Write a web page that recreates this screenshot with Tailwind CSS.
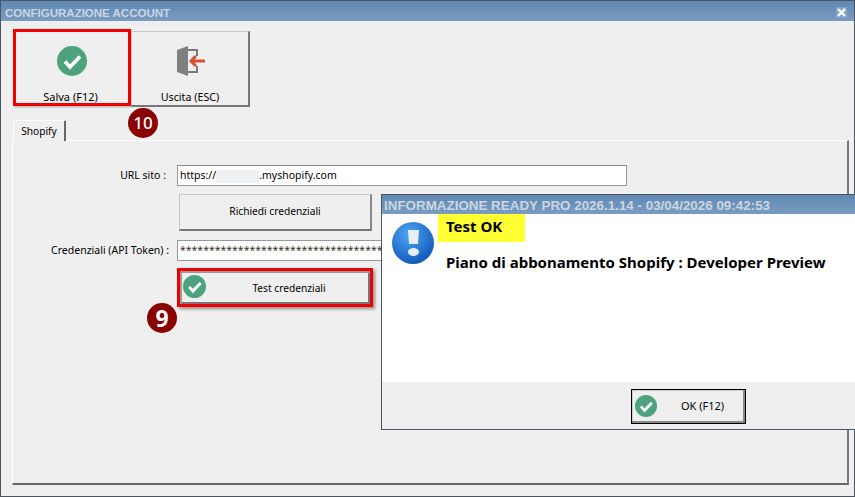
<!DOCTYPE html>
<html lang="en">
<head>
  <meta charset="UTF-8" />
  <title>Configurazione account</title>
  <script src="https://cdn.jsdelivr.net/npm/@tailwindcss/browser@4"></script>
</head>
<body class="bg-[#efefef] font-['Noto_Sans',sans-serif] text-black overflow-hidden">

  <!-- main window -->
  <div class="relative w-[855px] h-[497px] bg-[#efefef] border border-[#4d5560] flex flex-col">
    <div class="h-[20px] bg-gradient-to-b from-[#5f88b2] to-[#7b9cc1] flex items-center justify-between pl-[4px] pr-[7px] pt-[5px] shrink-0">
      <span class="font-['Liberation_Sans',sans-serif] text-[11.5px] font-bold text-[#c9d6e3]">CONFIGURAZIONE ACCOUNT</span>
      <span class="w-[11px] h-[11px] -mt-[3px] bg-[#86a4c6] flex items-center justify-center">
        <svg width="9" height="9" viewBox="0 0 9 9"><path d="M1 1l7 7M8 1L1 8" stroke="#fff" stroke-width="2.4"/></svg>
      </span>
    </div>

    <!-- toolbar -->
    <div class="flex pl-[12px] pt-[8px] h-[98px] shrink-0">
      <button class="w-[118px] h-[77px] border-[3px] border-[#f00000] bg-[#efefef] flex flex-col items-center text-[11px] pt-[14px] shadow-[1px_1px_2px_rgba(0,0,0,0.3)]">
        <svg class="shrink-0" width="30" height="30" viewBox="0 0 30 30"><circle cx="15" cy="15" r="15" fill="#4da37c"/><path d="M8 15.5l5 5.5L23 10.5" fill="none" stroke="#fff" stroke-width="3.6"/></svg>
        <span class="mt-[13px] -ml-[3px]">Salva (F12)</span>
      </button>
      <button class="w-[119px] h-[76px] mt-[2px] border border-[#c8c8c8] border-r-[#777] border-b-[#777] border-b-2 border-r-2 bg-[#efefef] flex flex-col items-center text-[10.7px] pt-[14px]">
        <svg class="ml-[1px] shrink-0" width="28" height="30" viewBox="0 0 28 30">
          <path d="M11 3h10v7h-2V5h-8zM11 27h10v-7h-2v5h-8z" fill="#7a7a7a"/>
          <path d="M0 4l11-4v30l-11-4z" fill="#7f7f7f"/>
          <path d="M28 15H15M19 10l-5 5 5 5" fill="none" stroke="#d8502f" stroke-width="3"/>
        </svg>
        <span class="mt-[13px]">Uscita (ESC)</span>
      </button>
    </div>

    <!-- tab -->
    <div class="pl-[12px] h-[21px] shrink-0 flex items-end">
      <div class="w-[53px] h-[21px] bg-[#efefef] border-l border-l-white border-t border-t-white border-r-2 border-r-[#666] rounded-t-[2px] text-[10.2px] text-center leading-[21px] -mb-px relative z-10">Shopify</div>
    </div>

    <!-- panel -->
    <div class="ml-[11px] w-[837px] h-[345px] border-l border-l-white border-t border-t-white border-r-2 border-r-[#777] border-b-2 border-b-[#666] pt-[24px] text-[10.5px] flex flex-col">
      <div class="flex items-center h-[21px]">
        <label class="w-[154px] text-right pr-[1px]">URL sito :</label>
        <div class="ml-[10px] w-[450px] h-[21px] bg-white border border-[#999] border-t-[#888] pl-[2px] leading-[18px] whitespace-nowrap">https://<span class="inline-block w-[43px] h-[13px] bg-[#eef0f1] align-middle"></span>.myshopify.com</div>
      </div>
      <button class="ml-[166px] mt-[8px] w-[193px] h-[37px] border border-[#c8c8c8] border-r-2 border-b-2 border-r-[#888] border-b-[#777] bg-[#efefef] text-[10.2px]">Richiedi credenziali</button>
      <div class="flex items-center h-[21px] mt-[9px]">
        <label class="w-[156px] text-right shrink-0 whitespace-nowrap text-[10.5px]">Credenziali (API Token) :</label>
        <div class="ml-[8px] w-[450px] h-[21px] bg-white border border-[#999] pl-[2px] leading-[18px] whitespace-nowrap text-[#3a3020]">************************************************************</div>
      </div>
      <button class="ml-[164px] mt-[7px] w-[196px] h-[39px] border-[3px] border-[#f00000] bg-[#efefef] relative text-[10.2px] pl-[28px] pt-[2px] shadow-[2px_2px_3px_rgba(0,0,0,0.4),inset_2px_2px_0_#999,inset_-2px_-2px_0_#777]">
        <svg class="absolute left-[3px] top-[4px]" width="23" height="23" viewBox="0 0 30 30"><circle cx="15" cy="15" r="15" fill="#4da37c"/><path d="M8 15.5l5 5.5L23 10.5" fill="none" stroke="#fff" stroke-width="3.8"/></svg>
        Test credenziali
      </button>
    </div>

    <!-- numbered annotations -->
    <div class="absolute left-[127px] top-[107px] w-[30px] h-[30px] rounded-full bg-[#8a0000] text-white text-[17px] font-medium flex items-center justify-center">10</div>
    <div class="absolute left-[146px] top-[302px] w-[30px] h-[30px] rounded-full bg-[#8a0000] text-white text-[23px] font-bold flex items-center justify-center">9</div>

    <!-- message dialog -->
    <div class="absolute left-[380px] top-[193px] w-[475px] h-[236px] border border-[#4d5560] bg-[#efefef] flex flex-col">
      <div class="h-[19px] bg-gradient-to-b from-[#5f88b2] to-[#7b9cc1] pl-[2px] pt-[2px] shrink-0 leading-[17px] font-['Liberation_Sans',sans-serif] text-[13.4px] font-bold text-[#c9d6e3] whitespace-nowrap">INFORMAZIONE READY PRO 2026.1.14 - 03/04/2026 09:42:53</div>
      <div class="h-[168px] bg-white relative shrink-0 flex">
        <svg class="ml-[10px] mt-[8px] shrink-0" width="42" height="42" viewBox="0 0 42 42">
          <defs><radialGradient id="blue" cx="0.4" cy="0.3" r="0.8"><stop offset="0" stop-color="#4fa6f0"/><stop offset="1" stop-color="#0a50b8"/></radialGradient></defs>
          <circle cx="21" cy="21" r="21" fill="url(#blue)"/>
          <path d="M16 8h11l-1 14h-9z" fill="#e8eef4"/>
          <ellipse cx="21.5" cy="30" rx="5.5" ry="4" fill="#e8eef4"/>
        </svg>
        <div class="ml-[4px] flex flex-col items-start">
          <div class="w-[87px] h-[28px] bg-[#ffff33] pl-[8px] text-[15px] font-bold leading-[24px]">Test OK</div>
          <div class="mt-[9px] pl-[8px] text-[15px] font-bold whitespace-nowrap leading-[22px]">Piano di abbonamento Shopify : Developer Preview</div>
        </div>
      </div>
      <div class="flex-1 pl-[249px] pt-[7px]">
        <button class="w-[115px] h-[35px] border border-black bg-[#efefef] shadow-[inset_-2px_-2px_0_#888,inset_1px_1px_0_#ccc] relative text-[11px] pl-[28px]">
          <svg class="absolute left-[3px] top-[5px]" width="22" height="22" viewBox="0 0 30 30"><circle cx="15" cy="15" r="15" fill="#4da37c"/><path d="M8 15.5l5 5.5L23 10.5" fill="none" stroke="#fff" stroke-width="3.8"/></svg>
          OK (F12)
        </button>
      </div>
    </div>
  </div>
</body>
</html>
